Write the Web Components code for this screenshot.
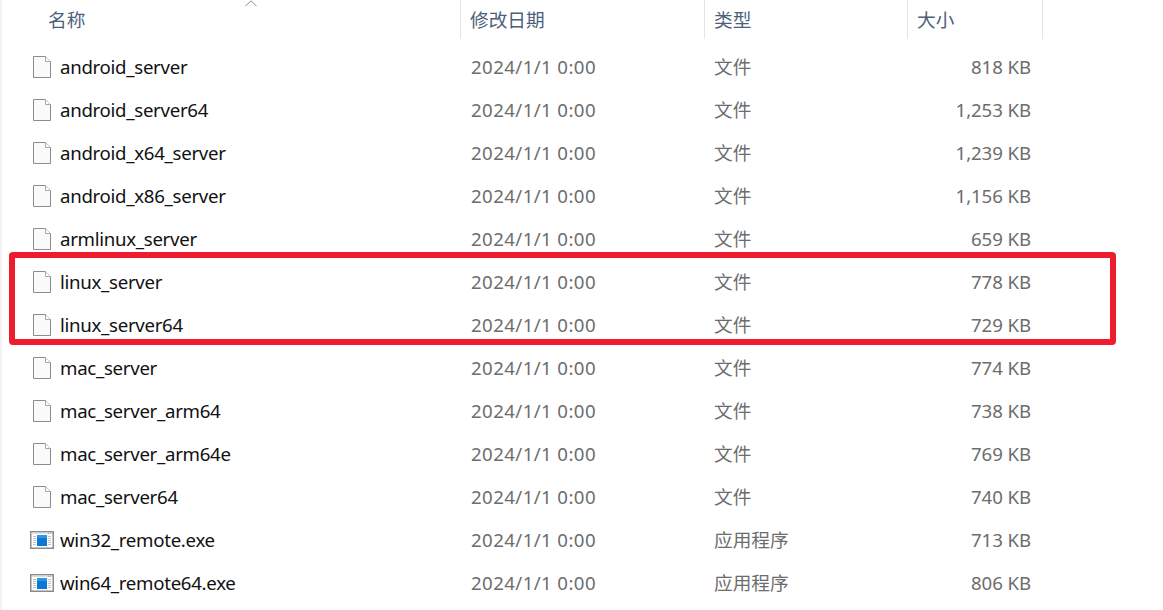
<!DOCTYPE html>
<html>
<head>
<meta charset="utf-8">
<style>
  html, body { margin: 0; padding: 0; background: #fff; overflow: hidden; }
</style>
</head>
<body>
<file-list></file-list>

<script>
const COLUMNS = '461px 244px 203px 135px';
const FONT = '"Noto Sans", "Noto Sans CJK SC", sans-serif';

class FileIcon extends HTMLElement {
  connectedCallback() {
    this.attachShadow({ mode: 'open' });
    const isApp = this.getAttribute('type') === 'app';
    this.shadowRoot.innerHTML = `
      <style>
        :host { display: block; width: 24px; height: 24px; }
        svg { display: block; }
      </style>
      ${isApp ? `
      <svg width="24" height="24" viewBox="0 0 24 24">
        <rect x="0.75" y="3.75" width="22.5" height="16.5" fill="#fff" stroke="#8a8a8a" stroke-width="1.5"/>
        <rect x="1.5" y="4.5" width="21" height="1.5" fill="#dedede"/>
        <path d="M18 5.2h1M20 5.2h1M22 5.2h0.5" stroke="#8f8f8f"/>
        <path d="M3 8.5h3M3 10.5h3M3 12.5h3M3 14.5h3M3 16.5h3M18 8.5h3M18 10.5h3M18 12.5h3M18 14.5h3M18 16.5h3" stroke="#c0c0c0"/>
        <rect x="7" y="7" width="10" height="11" fill="#0a78d4"/>
        <rect x="7" y="7" width="10" height="3" fill="#2b95e8"/>
      </svg>` : `
      <svg width="24" height="24" viewBox="0 0 24 24">
        <path d="M3.5 1.5H15.5L20.5 6.5V22.5H3.5Z" fill="#fafafa" stroke="#8c8c8c"/>
        <path d="M15.5 1.5V6.5H20.5" fill="#fff" stroke="#a8a8a8"/>
      </svg>`}
    `;
  }
}

class HeaderCell extends HTMLElement {
  connectedCallback() {
    this.attachShadow({ mode: 'open' });
    this.shadowRoot.innerHTML = `
      <style>
        :host {
          display: flex;
          align-items: center;
          box-sizing: border-box;
          height: 39px;
          padding-left: 9px;
          padding-bottom: 3px;
          border-right: 1px solid #e5e5e5;
          color: #4c607a;
          font-size: 18.67px;
          white-space: nowrap;
        }
      </style>
      <slot></slot>
    `;
  }
}

class FileRow extends HTMLElement {
  connectedCallback() {
    this.attachShadow({ mode: 'open' });
    const name = this.getAttribute('name');
    const date = this.getAttribute('date');
    const type = this.getAttribute('kind');
    const size = this.getAttribute('size');
    const iconType = type === '应用程序' ? 'app' : 'file';
    this.shadowRoot.innerHTML = `
      <style>
        :host {
          display: grid;
          grid-template-columns: ${COLUMNS};
          height: 43px;
          align-items: center;
          font-size: 18.67px;
          color: #6d6d6d;
          white-space: nowrap;
        }
        .name { display: flex; align-items: center; gap: 6px; padding-left: 30px; color: #111; letter-spacing: -0.3px; }
        .date { padding-left: 10px; letter-spacing: 0.4px; }
        .type { padding-left: 9px; padding-bottom: 2px; }
        .size { text-align: right; padding-right: 12px; letter-spacing: -0.1px; }
      </style>
      <div class="name"><file-icon type="${iconType}"></file-icon><span>${name}</span></div>
      <div class="date">${date}</div>
      <div class="type">${type}</div>
      <div class="size">${size}</div>
    `;
  }
}

class HighlightBox extends HTMLElement {
  connectedCallback() {
    this.attachShadow({ mode: 'open' });
    this.shadowRoot.innerHTML = `
      <style>
        :host {
          position: absolute;
          left: 9px;
          top: 252px;
          width: 1107px;
          height: 93px;
          box-sizing: border-box;
          border: 6px solid #ee1c2e;
          border-radius: 4px;
          pointer-events: none;
        }
      </style>
    `;
  }
}

const FILES = [
  ['android_server', '818 KB'],
  ['android_server64', '1,253 KB'],
  ['android_x64_server', '1,239 KB'],
  ['android_x86_server', '1,156 KB'],
  ['armlinux_server', '659 KB'],
  ['linux_server', '778 KB'],
  ['linux_server64', '729 KB'],
  ['mac_server', '774 KB'],
  ['mac_server_arm64', '738 KB'],
  ['mac_server_arm64e', '769 KB'],
  ['mac_server64', '740 KB'],
  ['win32_remote.exe', '713 KB', '应用程序'],
  ['win64_remote64.exe', '806 KB', '应用程序'],
];

class FileList extends HTMLElement {
  connectedCallback() {
    this.attachShadow({ mode: 'open' });
    this.shadowRoot.innerHTML = `
      <style>
        :host {
          display: block;
          position: relative;
          width: 1163px;
          height: 610px;
          box-sizing: border-box;
          overflow: hidden;
          font-family: ${FONT};
          background: #fff;
        }
        .edge { position: absolute; left: 0; top: 0; bottom: 0; width: 2px; background: #f4f4f4; }
        .head { display: grid; grid-template-columns: ${COLUMNS}; }
        header-cell:first-child { padding-left: 48px; }
        .sort { position: absolute; left: 245px; top: 0; }
        .rows { padding-top: 6px; }
      </style>
      <div class="edge"></div>
      <div class="head">
        <header-cell>名称</header-cell>
        <header-cell>修改日期</header-cell>
        <header-cell>类型</header-cell>
        <header-cell>大小</header-cell>
      </div>
      <svg class="sort" width="12" height="7" viewBox="0 0 12 7"><path d="M0.5 6L6 0.8L11.5 6" fill="none" stroke="#8a8a8a"/></svg>
      <div class="rows">
        ${FILES.map(([name, size, kind]) => `
          <file-row name="${name}" date="2024/1/1 0:00" kind="${kind || '文件'}" size="${size}"></file-row>
        `).join('')}
      </div>
      <highlight-box></highlight-box>
    `;
  }
}

customElements.define('file-icon', FileIcon);
customElements.define('header-cell', HeaderCell);
customElements.define('file-row', FileRow);
customElements.define('highlight-box', HighlightBox);
customElements.define('file-list', FileList);
</script>
</body>
</html>
